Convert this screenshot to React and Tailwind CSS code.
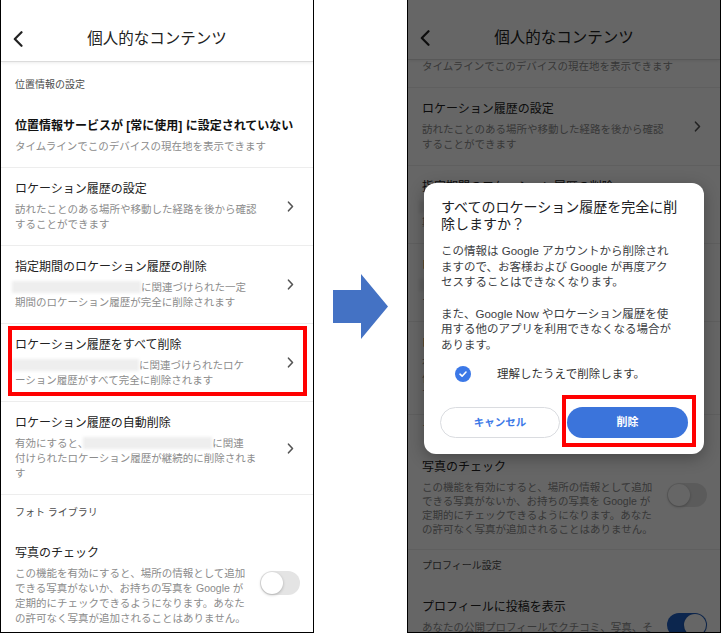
import React from "react";

function BackChevron() {
  return (
    <svg width="10" height="16" viewBox="0 0 10 16" fill="none">
      <path d="M8.5 1.2L1.8 8L8.5 14.8" stroke="#222" strokeWidth="2.2" strokeLinecap="round" strokeLinejoin="round" />
    </svg>
  );
}

function Chevron() {
  return (
    <svg width="7" height="11" viewBox="0 0 7 11" fill="none">
      <path d="M1.5 1.2L5.5 5.5L1.5 9.8" stroke="#555" strokeWidth="1.6" strokeLinecap="round" strokeLinejoin="round" />
    </svg>
  );
}

function ToggleOff() {
  return (
    <div className="flex h-[24px] w-[40px] items-center justify-start rounded-full bg-[#e4e4e4] p-[1px]">
      <div className="h-[22px] w-[22px] rounded-full bg-white shadow-[0_1px_3px_rgba(0,0,0,0.25)]" />
    </div>
  );
}

function ToggleOn() {
  return (
    <div className="flex h-[24px] w-[40px] items-center justify-end rounded-full bg-[#1f5fc4] p-[1px]">
      <div className="h-[22px] w-[22px] rounded-full bg-white shadow-[0_1px_3px_rgba(0,0,0,0.25)]" />
    </div>
  );
}

function Blur({ className }) {
  return <span className={`inline-block h-[12px] bg-[#eeeeee] blur-[1.5px] align-[-2px] ${className}`} />;
}

function Header({ tall }) {
  return (
    <div
      className={`relative z-10 shrink-0 border-b border-[#dcdcdc] bg-white shadow-[0_1px_3px_rgba(0,0,0,0.08)] ${
        tall ? "h-[62px] pt-[28px]" : "h-[60px] pt-[27px]"
      }`}
    >
      <div className="grid h-[22px] grid-cols-[40px_1fr_40px] items-center">
        <div className="flex items-center pl-[12px]">
          <BackChevron />
        </div>
        <div className="text-center text-[15.5px] leading-[22px] text-[#222]">個人的なコンテンツ</div>
        <div />
      </div>
    </div>
  );
}

function Section({ text, className }) {
  return <div className={`pl-[14px] text-[10px] leading-[14px] text-[#4d4d4d] whitespace-nowrap ${className}`}>{text}</div>;
}

function Item({ title, bold, lines, right, tight, pb, children }) {
  return (
    <div className="relative flex items-center border-b border-[#ededed] pl-[14px]">
      <div className={`flex-1 pt-[12px] ${pb || "pb-[13px]"}`}>
        <div
          className={`whitespace-nowrap text-[12px] leading-[18px] ${bold ? "font-bold text-[#111]" : "text-[#222]"}`}
        >
          {title}
        </div>
        <div
          className={`mt-[4px] whitespace-nowrap text-[10.5px] text-[#8c8c8c] ${
            tight ? "leading-[14px]" : "leading-[15px]"
          }`}
        >
          {lines.map((l, i) => (
            <div key={i}>{l}</div>
          ))}
        </div>
      </div>
      {right === "chevron" && (
        <div className="mr-[19px] flex items-center">
          <Chevron />
        </div>
      )}
      {right === "off" && (
        <div className="mr-[13px] mb-[6px]">
          <ToggleOff />
        </div>
      )}
      {right === "on" && (
        <div className="mr-[13px]">
          <ToggleOn />
        </div>
      )}
      {children}
    </div>
  );
}

function List({ variant }) {
  const right = variant === "right";
  return (
    <div className={right ? "mt-[-78px]" : ""}>
      <Section text="位置情報の設定" className="pt-[16px] pb-[13px]" />
      <Item
        bold
        title="位置情報サービスが [常に使用] に設定されていない"
        lines={["タイムラインでこのデバイスの現在地を表示できます"]}
      />
      <Item
        title="ロケーション履歴の設定"
        right="chevron"
        lines={["訪れたことのある場所や移動した経路を後から確認", "することができます"]}
      />
      <Item
        title="指定期間のロケーション履歴の削除"
        right="chevron"
        lines={[
          <>
            <Blur className="-ml-[3px] w-[129px]" />
            に関連づけられた一定
          </>,
          "期間のロケーション履歴が完全に削除されます",
        ]}
      />
      <Item
        title="ロケーション履歴をすべて削除"
        right="chevron"
        lines={[
          <>
            <Blur className="-ml-[3px] w-[127px]" />
            に関連づけられたロケ
          </>,
          "ーション履歴がすべて完全に削除されます",
        ]}
      >
        {!right && (
          <div className="absolute left-[7px] top-[2px] h-[70px] w-[299px] border-[4px] border-[#ff0000]" />
        )}
      </Item>
      <Item
        title="ロケーション履歴の自動削除"
        right="chevron"
        lines={[
          <>
            有効にすると、
            <Blur className="-ml-[5px] w-[129px]" />
            に関連
          </>,
          "付けられたロケーション履歴が継続的に削除されま",
          "す",
        ]}
      />
      <Section
        text="フォト ライブラリ"
        className={right ? "pt-[8px] pb-[9px]" : "pt-[11px] pb-[12px]"}
      />
      <Item
        title="写真のチェック"
        right="off"
        tight={right}
        lines={[
          "この機能を有効にすると、場所の情報として追加",
          "できる写真がないか、お持ちの写真を Google が",
          "定期的にチェックできるようになります。あなた",
          "の許可なく写真が追加されることはありません。",
        ]}
      />
      <Section text="プロフィール設定" className="pt-[9px] pb-[13px]" />
      <Item
        title="プロフィールに投稿を表示"
        right="on"
        lines={["あなたの公開プロフィールでクチコミ、写真、そ", "の他の投稿が表示されます"]}
      />
    </div>
  );
}

function Dialog() {
  return (
    <div className="absolute left-[16px] top-[183px] z-30 w-[280px] rounded-[12px] bg-white px-[16px] pt-[16px] pb-[16px] shadow-[0_4px_16px_rgba(0,0,0,0.3)]">
      <div className="pl-[1px] whitespace-nowrap text-[14px] leading-[17px] text-[#202124]">
        <div>すべてのロケーション履歴を完全に削</div>
        <div>除しますか？</div>
      </div>
      <div className="mt-[11px] pl-[1px] whitespace-nowrap text-[11.5px] leading-[15.5px] text-[#3c4043]">
        <div>この情報は Google アカウントから削除され</div>
        <div>ますので、お客様および Google が再度アク</div>
        <div>セスすることはできなくなります。</div>
        <div className="mt-[16px]">また、Google Now やロケーション履歴を使</div>
        <div>用する他のアプリを利用できなくなる場合が</div>
        <div>あります。</div>
      </div>
      <div className="mt-[11px] flex h-[20px] items-center pl-[15px]">
        <div className="flex h-[16px] w-[16px] items-center justify-center rounded-full bg-[#3b78e7]">
          <svg width="10" height="10" viewBox="0 0 10 10" fill="none">
            <path d="M2 5.2L4.1 7.2L8 3" stroke="#fff" strokeWidth="1.6" strokeLinecap="round" strokeLinejoin="round" />
          </svg>
        </div>
        <div className="ml-[26px] whitespace-nowrap text-[11.5px] leading-[20px] text-[#333]">理解したうえで削除します。</div>
      </div>
      <div className="mt-[23px] flex gap-[7px]">
        <div className="flex h-[31px] w-[120px] items-center justify-center rounded-full border border-[#dadce0] bg-white text-[10.5px] font-bold text-[#3b78e7]">
          キャンセル
        </div>
        <div className="flex h-[31px] flex-1 items-center justify-center rounded-full bg-[#3b74db] text-[11px] font-bold text-white">
          削除
        </div>
      </div>
      <div className="absolute left-[138px] top-[212px] h-[52px] w-[134px] border-[4px] border-[#ff0000]" />
    </div>
  );
}

export default function App() {
  return (
    <div className="flex h-[633px] w-[721px] overflow-hidden bg-white font-['Liberation_Sans','Noto_Sans_CJK_JP',sans-serif]">
      <div className="relative flex h-[633px] w-[314px] shrink-0 flex-col overflow-hidden border-x border-b border-black bg-white">
        <Header tall />
        <div className="min-h-0 flex-1 overflow-hidden">
          <List variant="left" />
        </div>
      </div>
      <div className="w-[93px] shrink-0 pl-[19px] pt-[274px]">
        <svg width="55" height="65" viewBox="0 0 55 65">
          <polygon points="0,16 28,16 28,0 55,32.5 28,65 28,49 0,49" fill="#4472c4" />
        </svg>
      </div>
      <div className="relative flex h-[633px] w-[314px] shrink-0 flex-col overflow-hidden border-x border-b border-black bg-white">
        <Header />
        <div className="min-h-0 flex-1 overflow-hidden">
          <List variant="right" />
        </div>
        <div className="absolute inset-0 z-20 bg-black/60" />
        <Dialog />
      </div>
    </div>
  );
}
